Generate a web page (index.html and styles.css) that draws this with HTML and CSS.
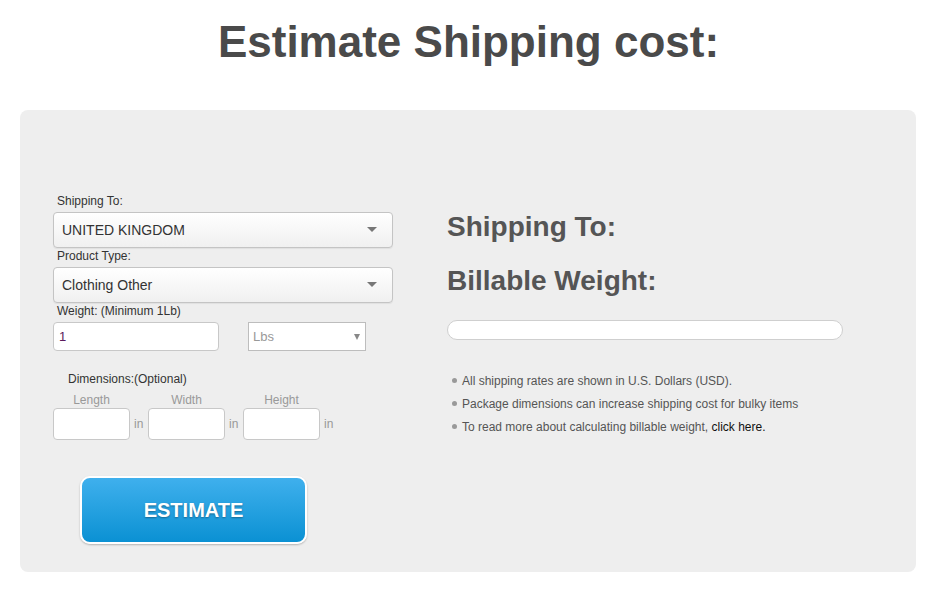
FILE: index.html
```html
<!DOCTYPE html>
<html lang="en">
<head>
    <meta charset="UTF-8">
    <meta name="viewport" content="width=device-width, initial-scale=1.0">
    <title>Estimate Shipping cost</title>
    <link rel="stylesheet" href="styles.css">
</head>
<body>

<h1 class="title">Estimate Shipping cost:</h1>

<div class="panel">
    <div class="calc">
        <label class="field-label">Shipping To:</label>
        <div class="select-box">
            <select>
                <option>UNITED KINGDOM</option>
                <option>UNITED STATES</option>
            </select>
        </div>

        <label class="field-label">Product Type:</label>
        <div class="select-box">
            <select>
                <option>Clothing Other</option>
            </select>
        </div>

        <label class="field-label">Weight: (Minimum 1Lb)</label>
        <div class="weight-row">
            <input type="text" class="weight" value="1">
            <div class="unit-box">
                <select>
                    <option>Lbs</option>
                    <option>Kg</option>
                </select>
            </div>
        </div>

        <p class="dims-title">Dimensions:(Optional)</p>
        <div class="dims">
            <div class="dim">
                <span class="dim-name">Length</span>
                <div class="dim-row"><input type="text"><span class="unit">in</span></div>
            </div>
            <div class="dim">
                <span class="dim-name">Width</span>
                <div class="dim-row"><input type="text"><span class="unit">in</span></div>
            </div>
            <div class="dim">
                <span class="dim-name">Height</span>
                <div class="dim-row"><input type="text"><span class="unit">in</span></div>
            </div>
        </div>

        <button class="estimate" onclick="estimate()">ESTIMATE</button>
    </div>

    <div class="result">
        <h2>Shipping To: <span id="dest"></span></h2>
        <h2>Billable Weight: <span id="billable"></span></h2>
        <div class="rate-bar"><div id="rate" class="rate-fill"></div></div>

        <ul class="notes">
            <li>All shipping rates are shown in U.S. Dollars (USD).</li>
            <li>Package dimensions can increase shipping cost for bulky items</li>
            <li>To read more about calculating billable weight, <a href="#">click here.</a></li>
        </ul>
    </div>
</div>

<script>
    function estimate() {
        // пока просто показываем то, что выбрано
        const selects = document.querySelectorAll('.select-box select');
        document.getElementById('dest').textContent = selects[0].value;
        document.getElementById('billable').textContent = document.querySelector('.weight').value + ' Lbs';
    }
</script>

</body>
</html>
```

FILE: styles.css
```css
body {
    font-family: "Liberation Sans", Arial, sans-serif;
    margin: 0;
    background: #fff;
    color: #333;
}
.title {
    text-align: center;
    font-size: 44px;
    color: #4a4a4a;
    margin: 16px 0 0;
    line-height: 52px;
    height: 94px;
}
.panel {
    display: flex;
    margin: 0 21px 0 20px;
    padding: 83px 0 28px 33px;
    background: #eeeeee;
    border-radius: 8px;
}
.calc {
    width: 340px;
}
.field-label {
    display: block;
    font-size: 12px;
    line-height: 16px;
    margin: 0 0 3px 4px;
    color: #333;
}
.select-box {
    position: relative;
}
.select-box select {
    appearance: none;
    -webkit-appearance: none;
    width: 340px;
    height: 36px;
    padding: 0 8px;
    font-family: inherit;
    font-size: 14px;
    color: #333;
    border: 1px solid #c4c4c4;
    border-radius: 4px;
    background: linear-gradient(#ffffff, #f0f0f0);
    box-shadow: 0 1px 1px rgba(0, 0, 0, 0.06);
}
/* стрелка селекта */
.select-box::after {
    content: "";
    position: absolute;
    right: 16px;
    top: 15px;
    border-left: 5px solid transparent;
    border-right: 5px solid transparent;
    border-top: 5px solid #777;
}
.weight-row {
    display: flex;
    align-items: center;
}
.weight {
    width: 166px;
    height: 29px;
    box-sizing: border-box;
    padding: 0 5px;
    font-family: inherit;
    font-size: 13px;
    color: #5c1a5c;
    border: 1px solid #c8c8c8;
    border-radius: 4px;
    background: #fff;
}
.unit-box {
    position: relative;
    margin-left: 29px;
}
.unit-box select {
    appearance: none;
    -webkit-appearance: none;
    width: 118px;
    height: 29px;
    padding: 0 4px;
    font-family: inherit;
    font-size: 13px;
    color: #999;
    border: 1px solid #bdbdbd;
    border-radius: 0;
    background: #fff;
}
.unit-box::after {
    content: "";
    position: absolute;
    right: 6px;
    top: 12px;
    border-left: 3.5px solid transparent;
    border-right: 3.5px solid transparent;
    border-top: 6px solid #888;
}
.dims-title {
    font-size: 12px;
    line-height: 16px;
    margin: 20px 0 5px 15px;
}
.dims {
    display: flex;
    gap: 5px;
}
.dim {
    display: flex;
    flex-direction: column;
}
.dim-name {
    width: 77px;
    text-align: center;
    font-size: 12px;
    line-height: 16px;
    color: #999;
}
.dim-row {
    display: flex;
    align-items: center;
}
.dim-row input {
    width: 77px;
    height: 32px;
    box-sizing: border-box;
    border: 1px solid #c8c8c8;
    border-radius: 4px;
    background: #fff;
}
.unit {
    font-size: 12px;
    color: #999;
    margin-left: 4px;
    width: 9px;
}
.estimate {
    display: block;
    margin: 36px 0 0 27px;
    width: 227px;
    height: 68px;
    border: 2px solid #fff;
    border-radius: 10px;
    background: linear-gradient(#3fb0ed, #0b91d3);
    box-shadow: 0 1px 2px rgba(0, 0, 0, 0.25);
    color: #fff;
    font-family: inherit;
    font-weight: bold;
    font-size: 20px;
    text-shadow: 0 1px 2px rgba(0, 0, 0, 0.35);
    cursor: pointer;
}
.result {
    margin-left: 54px;
    padding-top: 19px;
}
.result h2 {
    font-size: 28px;
    line-height: 30px;
    color: #555;
    margin: 0 0 24px;
}
.rate-bar {
    width: 396px;
    height: 20px;
    box-sizing: border-box;
    margin-top: 1px;
    border: 1px solid #cfcfcf;
    border-radius: 10px;
    background: #fff;
}
.rate-fill {
    height: 100%;
    width: 0;
}
.notes {
    list-style: none;
    margin: 30px 0 0;
    padding: 0 0 0 5px;
    font-size: 12px;
    color: #555;
}
.notes li {
    line-height: 23px;
}
.notes li::before {
    content: "";
    display: inline-block;
    width: 5px;
    height: 5px;
    border-radius: 50%;
    background: #999;
    margin-right: 5px;
    vertical-align: 2px;
}
.notes a {
    color: #111;
    text-decoration: none;
}
```
